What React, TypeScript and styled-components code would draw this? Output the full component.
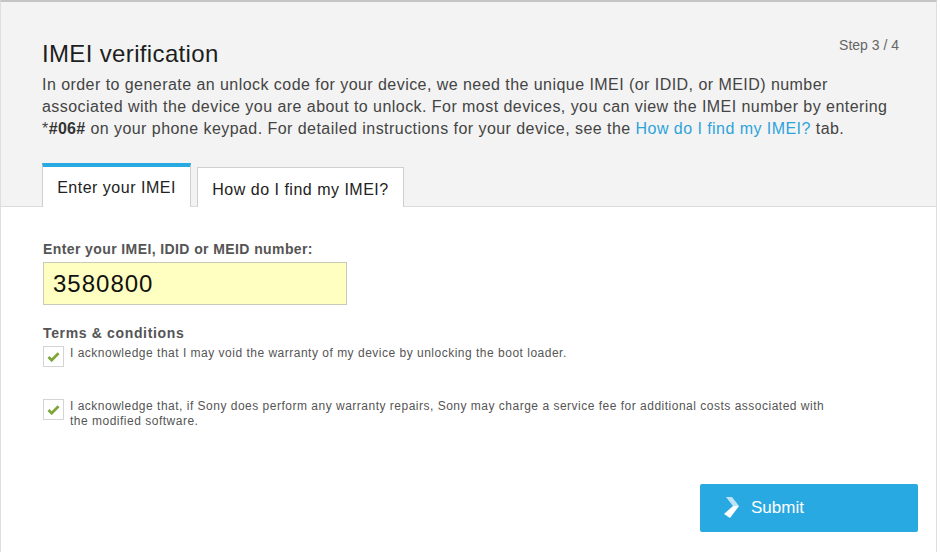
import React from 'react';
import styled, { createGlobalStyle } from 'styled-components';

const GlobalStyle = createGlobalStyle`
  html, body {
    margin: 0;
    padding: 0;
    background: #ffffff;
    font-family: "Liberation Sans", Arial, sans-serif;
  }
  * { box-sizing: border-box; }
`;

const Page = styled.div`
  width: 937px;
  height: 552px;
  border-top: 2px solid #c4c4c4;
  border-left: 1px solid #dedede;
  border-right: 1px solid #dedede;
  background: #ffffff;
`;

const Header = styled.div`
  background: #f3f3f3;
  border-bottom: 1px solid #dcdcdc;
  padding: 32px 0 0 41px;
  height: 205px;
  display: flex;
  flex-direction: column;
`;

const TitleRow = styled.div`
  display: flex;
  justify-content: space-between;
  align-items: flex-start;
  padding-right: 37px;
`;

const Title = styled.h1`
  margin: 0;
  font-size: 24px;
  font-weight: normal;
  letter-spacing: 0.35px;
  color: #1e1e1e;
  line-height: 40px;
`;

const Step = styled.span`
  font-size: 14px;
  color: #666;
  margin-top: 3px;
`;

const Intro = styled.p`
  margin: 0;
  font-size: 16px;
  line-height: 22px;
  letter-spacing: 0.45px;
  color: #444;
  white-space: nowrap;

  b { color: #333; letter-spacing: 0.3px; }
  a { color: #2ea3da; text-decoration: none; }
`;

const Tabs = styled.div`
  display: flex;
  align-items: flex-end;
  gap: 6px;
  margin-top: auto;
  margin-bottom: -1px;
`;

const Tab = styled.div<{ $active?: boolean }>`
  background: #ffffff;
  font-size: 16px;
  letter-spacing: 0.5px;
  color: #222;
  display: flex;
  align-items: center;
  justify-content: center;
  border: 1px solid #cfcfcf;
  border-bottom: none;
  border-top: ${p => (p.$active ? '4px solid #29a9e1' : '1px solid #cfcfcf')};
  width: ${p => (p.$active ? '149px' : '207px')};
  height: ${p => (p.$active ? '44px' : '40px')};
  padding-top: ${p => (p.$active ? '2px' : '4px')};
`;

const Body = styled.div`
  padding: 34px 0 0 42px;
  display: flex;
  flex-direction: column;
`;

const Label = styled.label`
  font-size: 14px;
  font-weight: bold;
  letter-spacing: 0.4px;
  color: #555;
  margin-bottom: 5px;
`;

const ImeiInput = styled.input`
  width: 304px;
  height: 43px;
  background: #ffffc2;
  border: 1px solid #c9c9b9;
  font-family: "Liberation Sans", Arial, sans-serif;
  font-size: 24px;
  letter-spacing: 1px;
  color: #111;
  padding: 0 9px;
  outline: none;
`;

const TermsTitle = styled.div`
  font-size: 14px;
  font-weight: bold;
  letter-spacing: 0.65px;
  color: #555;
  margin-top: 20px;
  margin-bottom: 5px;
`;

const CheckRow = styled.div<{ $gap?: number }>`
  display: flex;
  align-items: flex-start;
  gap: 6px;
  margin-bottom: ${p => p.$gap ?? 0}px;
`;

const Box = styled.span`
  flex: none;
  width: 21px;
  height: 21px;
  border: 1px solid #d4d4d4;
  background: #fff;
  display: flex;
  align-items: center;
  justify-content: center;
`;

const CheckText = styled.span`
  font-size: 12px;
  line-height: 15px;
  letter-spacing: 0.5px;
  color: #555;
  white-space: nowrap;
`;

const Footer = styled.div`
  display: flex;
  justify-content: flex-end;
  padding-right: 18px;
  margin-top: 55px;
`;

const SubmitButton = styled.button`
  width: 218px;
  height: 48px;
  background: #29a9e1;
  border: none;
  border-radius: 2px;
  color: #fff;
  font-family: "Liberation Sans", Arial, sans-serif;
  font-size: 17px;
  display: flex;
  align-items: center;
  gap: 10px;
  padding: 0 0 0 23px;
  cursor: pointer;
`;

const Check = () => (
  <svg width="13" height="11" viewBox="0 0 14 12">
    <path d="M1.5 6.5 L5 10 L12.5 2.5" fill="none" stroke="#7ea638" strokeWidth="3" strokeLinejoin="miter" />
  </svg>
);

const SubmitIcon = () => (
  <svg width="18" height="22" viewBox="0 0 18 22">
    <polygon points="3,0 9,0 16,9 10,9" fill="#bfe3f5" />
    <polygon points="10,9 16,9 7,21 1,17" fill="#ffffff" />
  </svg>
);

export default function App() {
  return (
    <>
      <GlobalStyle />
      <Page>
        <Header>
          <TitleRow>
            <Title>IMEI verification</Title>
            <Step>Step 3 / 4</Step>
          </TitleRow>
          <Intro>
            In order to generate an unlock code for your device, we need the unique IMEI (or IDID, or MEID) number
            <br />
            associated with the device you are about to unlock. For most devices, you can view the IMEI number by entering
            <br />
            *<b>#06#</b> on your phone keypad. For detailed instructions for your device, see the{' '}
            <a href="#">How do I find my IMEI?</a> tab.
          </Intro>
          <Tabs>
            <Tab $active>Enter your IMEI</Tab>
            <Tab>How do I find my IMEI?</Tab>
          </Tabs>
        </Header>
        <Body>
          <Label>Enter your IMEI, IDID or MEID number:</Label>
          <ImeiInput defaultValue="3580800" />
          <TermsTitle>Terms &amp; conditions</TermsTitle>
          <CheckRow $gap={32}>
            <Box><Check /></Box>
            <CheckText>I acknowledge that I may void the warranty of my device by unlocking the boot loader.</CheckText>
          </CheckRow>
          <CheckRow>
            <Box><Check /></Box>
            <CheckText>
              I acknowledge that, if Sony does perform any warranty repairs, Sony may charge a service fee for additional costs associated with
              <br />
              the modified software.
            </CheckText>
          </CheckRow>
          <Footer>
            <SubmitButton>
              <SubmitIcon />
              Submit
            </SubmitButton>
          </Footer>
        </Body>
      </Page>
    </>
  );
}
